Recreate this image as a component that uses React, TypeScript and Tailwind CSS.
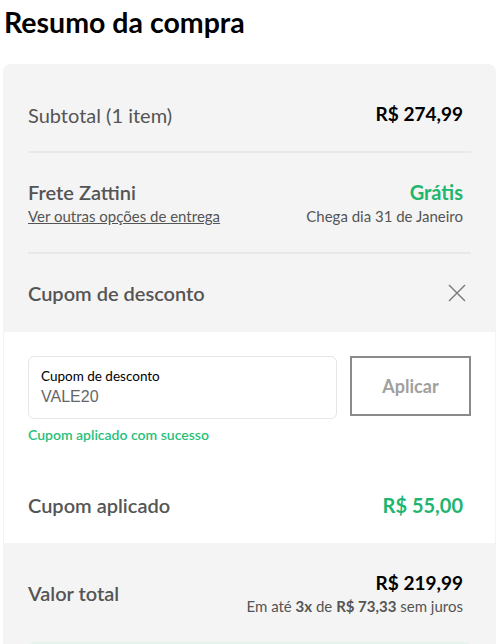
export default function App() {
  return (
    <div className="w-[500px] h-[644px] overflow-hidden bg-white font-['Lato','Noto_Sans',sans-serif]">
      <h1 className="px-[4px] pt-[3px] text-[28.5px] font-bold leading-[38px] text-black">Resumo da compra</h1>

      <div className="mx-[3px] mt-[23px] w-[493px] rounded-t-[8px] bg-[#f4f4f4]">
        {/* Subtotal */}
        <div className="mx-[25px] flex h-[89px] items-center justify-between border-b-2 border-[#e8e8e8] pr-[8px] pt-[14px]">
          <span className="text-[20px] text-[#555]">Subtotal (1 item)</span>
          <span className="text-[19px] font-bold text-black">R$ 274,99</span>
        </div>

        {/* Frete */}
        <div className="mx-[25px] flex h-[101px] items-center justify-between border-b-2 border-[#e8e8e8] pr-[8px]">
          <div className="flex flex-col">
            <span className="text-[20px] font-semibold leading-[26px] text-[#555]">Frete Zattini</span>
            <a className="text-[15px] leading-[22px] text-[#555] underline">Ver outras opções de entrega</a>
          </div>
          <div className="flex flex-col items-end">
            <span className="text-[20px] font-bold leading-[26px] text-[#1fb56f]">Grátis</span>
            <span className="text-[15px] leading-[22px] text-[#555]">Chega dia 31 de Janeiro</span>
          </div>
        </div>

        {/* Cupom header */}
        <div className="mx-[25px] flex h-[78px] items-center justify-between pr-[5px]">
          <span className="text-[20px] font-semibold text-[#555]">Cupom de desconto</span>
          <svg width="18" height="18" viewBox="0 0 18 18" className="text-[#777]">
            <path d="M1 1L17 17M17 1L1 17" stroke="currentColor" strokeWidth="1.4" fill="none" />
          </svg>
        </div>

        {/* White coupon area */}
        <div className="mx-[1px] bg-white px-[24px] pt-[24px]">
          <div className="flex gap-[13px]">
            <div className="flex h-[63px] w-[309px] flex-col justify-center rounded-[6px] border border-[#e6e6e6] px-[12px]">
              <span className="text-[13.5px] leading-[19px] text-black">Cupom de desconto</span>
              <span className="font-['Liberation_Sans',sans-serif] text-[16px] leading-[22px] text-[#666]">VALE20</span>
            </div>
            <button className="h-[60px] w-[121px] border-2 border-[#8a8a8a] text-[18px] font-bold text-[#a0a0a0]">
              Aplicar
            </button>
          </div>
          <p className="mt-[6px] text-[14px] font-semibold leading-[20px] text-[#28c07a]">Cupom aplicado com sucesso</p>

          <div className="flex items-center justify-between pr-[8px] pt-[47px] pb-[25px]">
            <span className="text-[20px] font-semibold leading-[26px] text-[#555]">Cupom aplicado</span>
            <span className="text-[20px] font-bold leading-[26px] text-[#1fb56f]">R$ 55,00</span>
          </div>
        </div>

        {/* Total */}
        <div className="mx-[25px] flex h-[99px] items-center justify-between pr-[8px]">
          <span className="text-[20px] font-semibold text-[#555]">Valor total</span>
          <div className="flex flex-col items-end">
            <span className="text-[19px] font-bold leading-[26px] text-black">R$ 219,99</span>
            <span className="text-[15px] leading-[20px] text-[#555]">
              Em até <b>3x</b> de <b>R$ 73,33</b> sem juros
            </span>
          </div>
        </div>
        <div className="mx-[25px] h-[10px] rounded-t-[6px] bg-[#e3f5ec]" />
      </div>
    </div>
  );
}
